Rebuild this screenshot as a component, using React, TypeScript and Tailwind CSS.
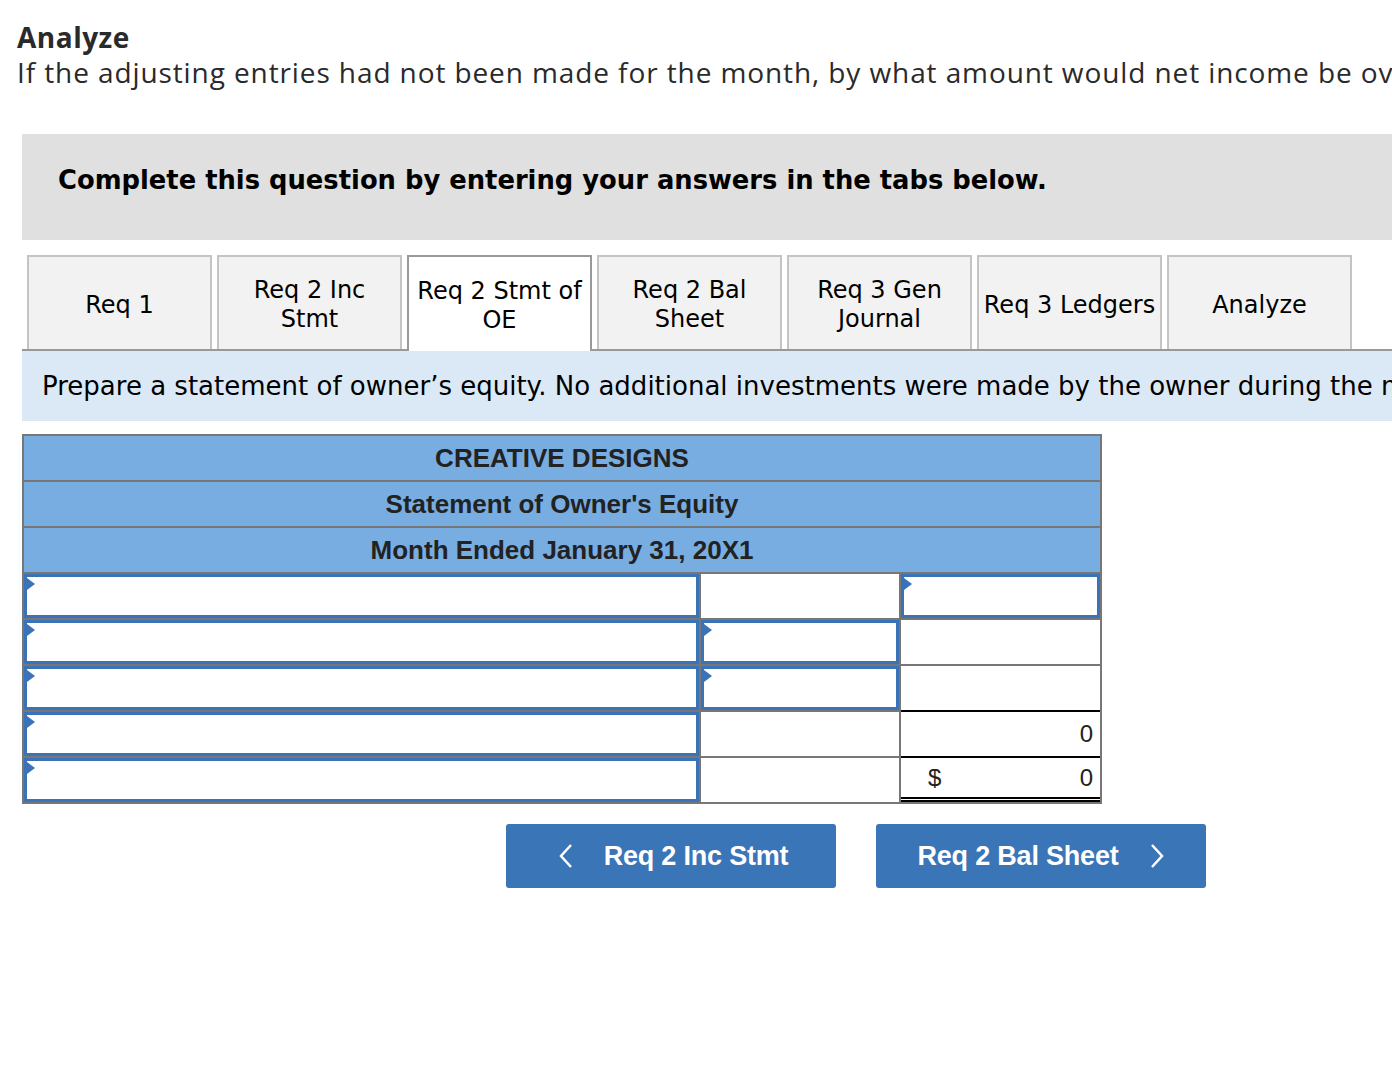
import { FunctionComponent, ReactNode } from "react";

const tabs = [
  { label: "Req 1" },
  { label: "Req 2 Inc Stmt", lines: ["Req 2 Inc", "Stmt"] },
  { label: "Req 2 Stmt of OE", lines: ["Req 2 Stmt of", "OE"], active: true },
  { label: "Req 2 Bal Sheet", lines: ["Req 2 Bal", "Sheet"] },
  { label: "Req 3 Gen Journal", lines: ["Req 3 Gen", "Journal"] },
  { label: "Req 3 Ledgers" },
  { label: "Analyze" },
];

const Marker: FunctionComponent = () => (
  <span className="absolute left-0 top-[1px] w-0 h-0 border-y-[6px] border-y-transparent border-l-[8px] border-l-[#3a73b8]" />
);

const InputBox: FunctionComponent = () => (
  <div className="relative w-full h-full border-[3px] border-[#3a73b8] bg-white">
    <Marker />
  </div>
);

type CellProps = {
  className?: string;
  children?: ReactNode;
};

const Cell: FunctionComponent<CellProps> = ({ className = "", children }) => (
  <div className={`relative h-full ${className}`}>{children}</div>
);

const App: FunctionComponent = () => {
  return (
    <div className="w-[1392px] h-[1080px] overflow-hidden bg-white text-[#222]">
      <div className="pt-[20px] pl-[17px] font-['Open_Sans',sans-serif] text-[#2a2a2a]">
        <h2 className="text-[28px] leading-[34px] font-bold tracking-[0.5px]">Analyze</h2>
        <p className="text-[28px] leading-[36px] whitespace-nowrap tracking-[0.9px]">
          If the adjusting entries had not been made for the month, by what amount would net income be overstated or understated?
        </p>
      </div>

      <div className="ml-[22px] mt-[44px] w-[1400px]">
        <div className="h-[106px] bg-[#e0e0e0] flex items-center pl-[36px] pb-[14px]">
          <span className="font-['DejaVu_Sans',Verdana,sans-serif] font-bold text-[25.8px] text-black whitespace-nowrap">
            Complete this question by entering your answers in the tabs below.
          </span>
        </div>

        <div className="mt-[15px] flex items-end gap-[5px] pl-[5px] border-b-2 border-[#999] h-[96px] font-['DejaVu_Sans',Verdana,sans-serif] text-[24px] leading-[29px] text-black">
          {tabs.map((t) =>
            t.active ? (
              <div
                key={t.label}
                className="w-[185px] h-[96px] -mb-[2px] pt-[4px] bg-white border-2 border-b-0 border-[#999] flex flex-col items-center justify-center text-center"
              >
                {t.lines ? t.lines.map((l) => <span key={l}>{l}</span>) : t.label}
              </div>
            ) : (
              <div
                key={t.label}
                className="w-[185px] h-[94px] pt-[4px] bg-[#f2f2f2] border-2 border-b-0 border-[#c4c4c4] flex flex-col items-center justify-center text-center whitespace-nowrap"
              >
                {t.lines ? t.lines.map((l) => <span key={l}>{l}</span>) : t.label}
              </div>
            )
          )}
        </div>

        <div className="h-[70px] bg-[#dbe9f7] flex items-center pl-[20px] font-['DejaVu_Sans',Verdana,sans-serif] text-[26px] text-black whitespace-nowrap">
          Prepare a statement of owner’s equity. No additional investments were made by the owner during the month.
        </div>

        <div className="mt-[13px] w-[1080px] border-2 border-[#777] font-['Liberation_Sans',Arial,sans-serif]">
          {["CREATIVE DESIGNS", "Statement of Owner's Equity", "Month Ended January 31, 20X1"].map((h, i) => (
            <div
              key={h}
              className={`bg-[#78ade2] flex items-center justify-center font-bold text-[26px] text-[#222] ${
                i < 2 ? "h-[46px] border-b-2 border-[#777]" : "h-[44px]"
              }`}
            >
              {h}
            </div>
          ))}

          {[0, 1, 2, 3, 4].map((r) => (
            <div key={r} className="flex h-[46px]">
              <Cell className="w-[677px] border-t-2 border-r-2 border-[#777]">
                <InputBox />
              </Cell>
              <Cell className="w-[200px] border-t-2 border-r-2 border-[#777]">
                {(r === 1 || r === 2) && <InputBox />}
              </Cell>
              {r === 0 && (
                <Cell className="flex-1 border-t-2 border-[#777]">
                  <InputBox />
                </Cell>
              )}
              {(r === 1 || r === 2) && <Cell className="flex-1 border-t-2 border-[#777]" />}
              {r === 3 && (
                <Cell className="flex-1 border-t-2 border-black flex items-center justify-end pr-[7px] text-[24px] text-[#222]">
                  0
                </Cell>
              )}
              {r === 4 && (
                <Cell className="flex-1 border-t-2 border-b-[5px] border-double border-black -mb-[2px] flex items-center justify-between pl-[27px] pr-[7px] text-[24px] text-[#222]">
                  <span>$</span>
                  <span>0</span>
                </Cell>
              )}
            </div>
          ))}
        </div>

        <div className="mt-[20px] flex gap-[40px] pl-[484px] font-['Liberation_Sans',Arial,sans-serif]">
          <button className="w-[330px] h-[64px] rounded-[3px] bg-[#3a75b7] text-white flex items-center justify-center gap-[30px] pl-[4px]">
            <svg width="16" height="26" viewBox="0 0 16 26" fill="none" stroke="white" strokeWidth="2.5">
              <path d="M13 2 L3 13 L13 24" />
            </svg>
            <span className="font-bold text-[27px] tracking-[-0.2px]">Req 2 Inc Stmt</span>
          </button>
          <button className="w-[330px] h-[64px] rounded-[3px] bg-[#3a75b7] text-white flex items-center justify-center gap-[30px]">
            <span className="font-bold text-[27px] tracking-[-0.2px]">Req 2 Bal Sheet</span>
            <svg width="16" height="26" viewBox="0 0 16 26" fill="none" stroke="white" strokeWidth="2.5">
              <path d="M3 2 L13 13 L3 24" />
            </svg>
          </button>
        </div>
      </div>
    </div>
  );
};

export default App;
